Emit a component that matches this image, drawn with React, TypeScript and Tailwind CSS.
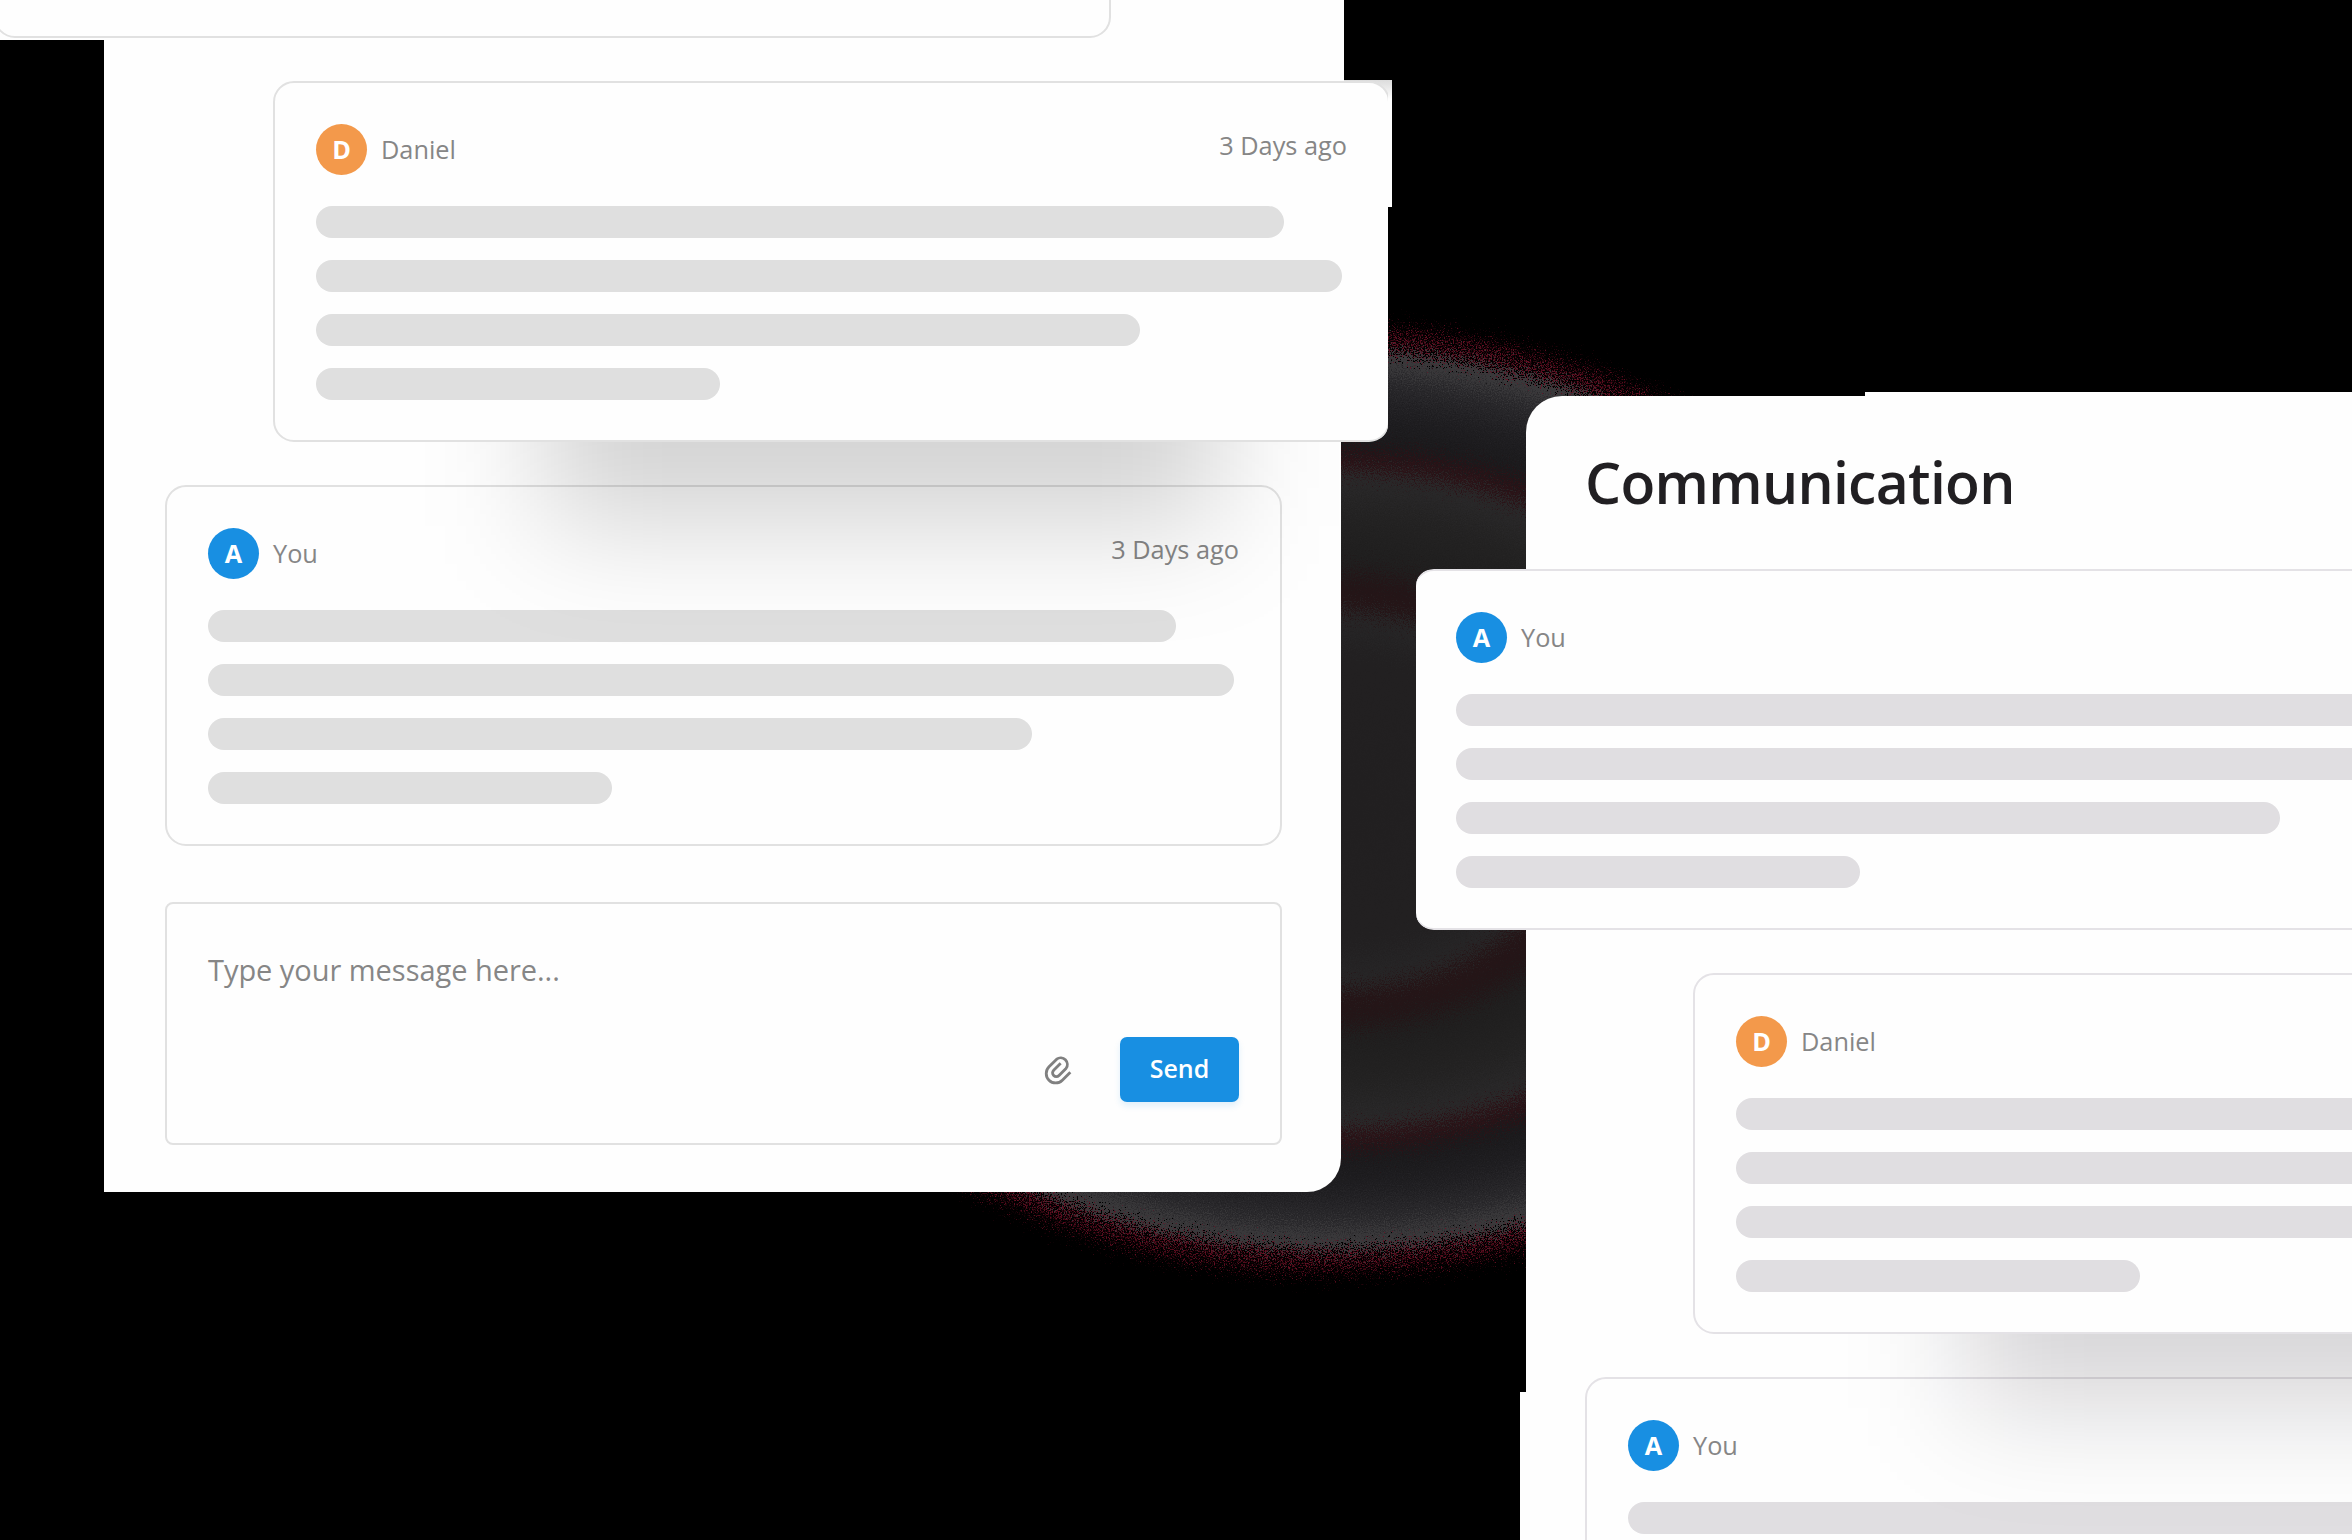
import React from "react";

const BAR_WIDTHS = ["w-[968px]", "w-[1026px]", "w-[824px]", "w-[404px]"];

type Tone = "neutral" | "cool";

function Bars({ tone }: { tone: Tone }) {
  return (
    <div className="flex flex-col gap-[22px]">
      {BAR_WIDTHS.map((w) => (
        <div
          key={w}
          className={`h-8 rounded-full ${w} ${tone === "neutral" ? "bg-[#dfdfdf]" : "bg-[#e0dee1]"}`}
        />
      ))}
    </div>
  );
}

function Message({
  author,
  time,
  tone = "neutral",
  className = "",
}: {
  author?: "You" | "Daniel";
  time?: string;
  tone?: Tone;
  className?: string;
}) {
  const you = author === "You";
  return (
    <article
      className={`h-[361px] w-[1117px] shrink-0 rounded-[21px] border-2 px-[41px] pt-[41px] ${
        tone === "neutral" ? "border-[#e1e1e1]" : "border-[#e4e2e6]"
      } ${className}`}
    >
      {author && (
        <>
          <header className="mb-[31px] flex h-[51px] items-center text-[25.3px] leading-[34px] text-[#868686]">
            <div
              className={`flex size-[51px] items-center justify-center rounded-full pb-px font-bold text-white ${
                you ? "bg-[#188fe2]" : "bg-[#f3994b]"
              }`}
            >
              {you ? "A" : "D"}
            </div>
            <span className="ml-[14px] pb-[2px]">{author}</span>
            {time && <span className="ml-auto pb-[9px]">{time}</span>}
          </header>
          <Bars tone={tone} />
        </>
      )}
    </article>
  );
}

function Glow() {
  return (
    <svg className="absolute inset-0" width="2352" height="1540" viewBox="0 0 2352 1540" fill="none">
      <defs>
        <radialGradient id="rings">
          <stop offset="0" stopColor="#211f20" />
          <stop offset="0.32" stopColor="#222021" />
          <stop offset="0.4" stopColor="#262526" />
          <stop offset="0.44" stopColor="#251517" />
          <stop offset="0.48" stopColor="#231517" />
          <stop offset="0.53" stopColor="#1f1e1e" />
          <stop offset="0.63" stopColor="#232222" />
          <stop offset="0.715" stopColor="#292829" />
          <stop offset="0.745" stopColor="#2b1418" />
          <stop offset="0.765" stopColor="#281216" />
          <stop offset="0.79" stopColor="#1a191b" />
          <stop offset="0.86" stopColor="#1f1e21" />
          <stop offset="0.93" stopColor="#2a292c" />
          <stop offset="0.97" stopColor="#39383a" />
          <stop offset="1" stopColor="#3a393b" />
        </radialGradient>
        <radialGradient id="rim">
          <stop offset="0.93" stopColor="#6a1226" stopOpacity="0" />
          <stop offset="0.95" stopColor="#6a1226" />
          <stop offset="0.97" stopColor="#500a1a" />
          <stop offset="1" stopColor="#28030a" stopOpacity="0" />
        </radialGradient>
        <filter id="scatter" x="-5%" y="-5%" width="110%" height="110%" colorInterpolationFilters="sRGB">
          <feTurbulence type="fractalNoise" baseFrequency="0.83" numOctaves="3" seed="4" />
          <feDisplacementMap in="SourceGraphic" scale="60" xChannelSelector="R" yChannelSelector="G" />
        </filter>
        <filter id="speckle" x="-5%" y="-5%" width="110%" height="110%" colorInterpolationFilters="sRGB">
          <feTurbulence type="fractalNoise" baseFrequency="0.77" numOctaves="3" seed="11" result="noise" />
          <feColorMatrix
            in="noise"
            type="matrix"
            values="0 0 0 0 0  0 0 0 0 0  0 0 0 0 0  7 0 0 0 -3.1"
            result="mask"
          />
          <feDisplacementMap in="SourceGraphic" in2="noise" scale="60" xChannelSelector="G" yChannelSelector="B" result="ring" />
          <feComposite in="ring" in2="mask" operator="in" />
        </filter>
      </defs>
      <ellipse cx="1330" cy="800" rx="595" ry="451" fill="url(#rings)" filter="url(#scatter)" />
      <ellipse cx="1330" cy="800" rx="632" ry="480" fill="url(#rim)" filter="url(#speckle)" />
    </svg>
  );
}

function PaperClip() {
  return (
    <svg
      className="mt-[2px] h-[31px] w-[30px]"
      viewBox="0 0 90 92"
      fill="none"
      stroke="#808080"
      strokeWidth="8.5"
      strokeLinecap="butt"
      strokeLinejoin="round"
    >
      <path d="M82 51 L58 75 A28 28 0 0 1 18 35 L41 12 A20 20 0 0 1 69 40 L48 61 A11.3 11.3 0 0 1 32 45 L53 24" />
    </svg>
  );
}

export default function App() {
  return (
    <main className="relative h-[1540px] w-[2352px] overflow-hidden bg-black font-['Open_Sans',sans-serif]">
      <Glow />

      {/* Left window */}
      <div className="absolute left-0 top-0 h-10 w-[110px] bg-[#fefefe]" />
      <div className="absolute left-[1340px] top-0 h-[100px] w-1 bg-[#fefefe]" />
      <section className="absolute left-[104px] top-0 flex h-[1192px] w-[1237px] flex-col rounded-br-[34px] bg-[#fefefe]">
        <Message className="-ml-[110px] -mt-[323px]" />
        <div className="relative z-20 ml-[169px] mt-[43px] w-[1115px] shrink-0">
          <div className="absolute -top-px right-[-4px] h-[127px] w-12 bg-linear-to-b from-[#dcdcdc] to-[#fefefe] to-15%" />
          <div className="relative overflow-hidden rounded-br-[17px]">
            <Message author="Daniel" time="3 Days ago" className="bg-[#fefefe]" />
          </div>
        </div>
        <div className="absolute left-[440px] top-[290px] z-10 h-[236px] w-[676px] bg-black/17 blur-[58px]" />
        <Message author="You" time="3 Days ago" className="ml-[61px] mt-[43px]" />
        <div className="ml-[61px] mt-[56px] flex h-[243px] w-[1117px] shrink-0 flex-col justify-between rounded-lg border-2 border-[#e1e1e1] px-[41px] pb-[41px] pt-[46px]">
          <p className="text-[29px] leading-[40px] tracking-[-0.04px] text-[#868686]">Type your message here...</p>
          <div className="flex items-center justify-end gap-[47px]">
            <PaperClip />
            <button className="h-[65px] w-[119px] rounded-[7px] bg-[#188fe2] pb-px text-[25px] font-semibold text-white shadow-[0_4px_6px_#188fe220]">
              Send
            </button>
          </div>
        </div>
      </section>

      {/* Right window */}
      <div className="absolute left-[1865px] top-[392px] h-10 w-[487px] bg-[#fefefe]" />
      <div className="absolute left-[1520px] top-[1392px] h-[148px] w-10 bg-[#fefefe]" />
      <section className="absolute left-[1526px] top-[396px] flex h-[1144px] w-[1240px] flex-col rounded-tl-[36px] bg-[#fefefe]">
        <h1 className="ml-[59px] mt-[46px] h-[127px] shrink-0 text-[57px] font-semibold leading-[81px] tracking-[-0.7px] text-[#211f22]">
          Communication
        </h1>
        <div className="relative z-20 -ml-[110px] flex w-[1114px] shrink-0 justify-end overflow-hidden rounded-l-[17px]">
          <Message author="You" tone="cool" className="bg-[#fefefe]" />
        </div>
        <Message author="Daniel" tone="cool" className="relative z-20 ml-[167px] mt-[43px] bg-[#fefefe]" />
        <div className="absolute left-[440px] top-[786px] z-10 h-[226px] w-[676px] bg-[#08000f]/16 blur-[58px]" />
        <Message author="You" tone="cool" className="ml-[59px] mt-[43px]" />
      </section>
    </main>
  );
}
